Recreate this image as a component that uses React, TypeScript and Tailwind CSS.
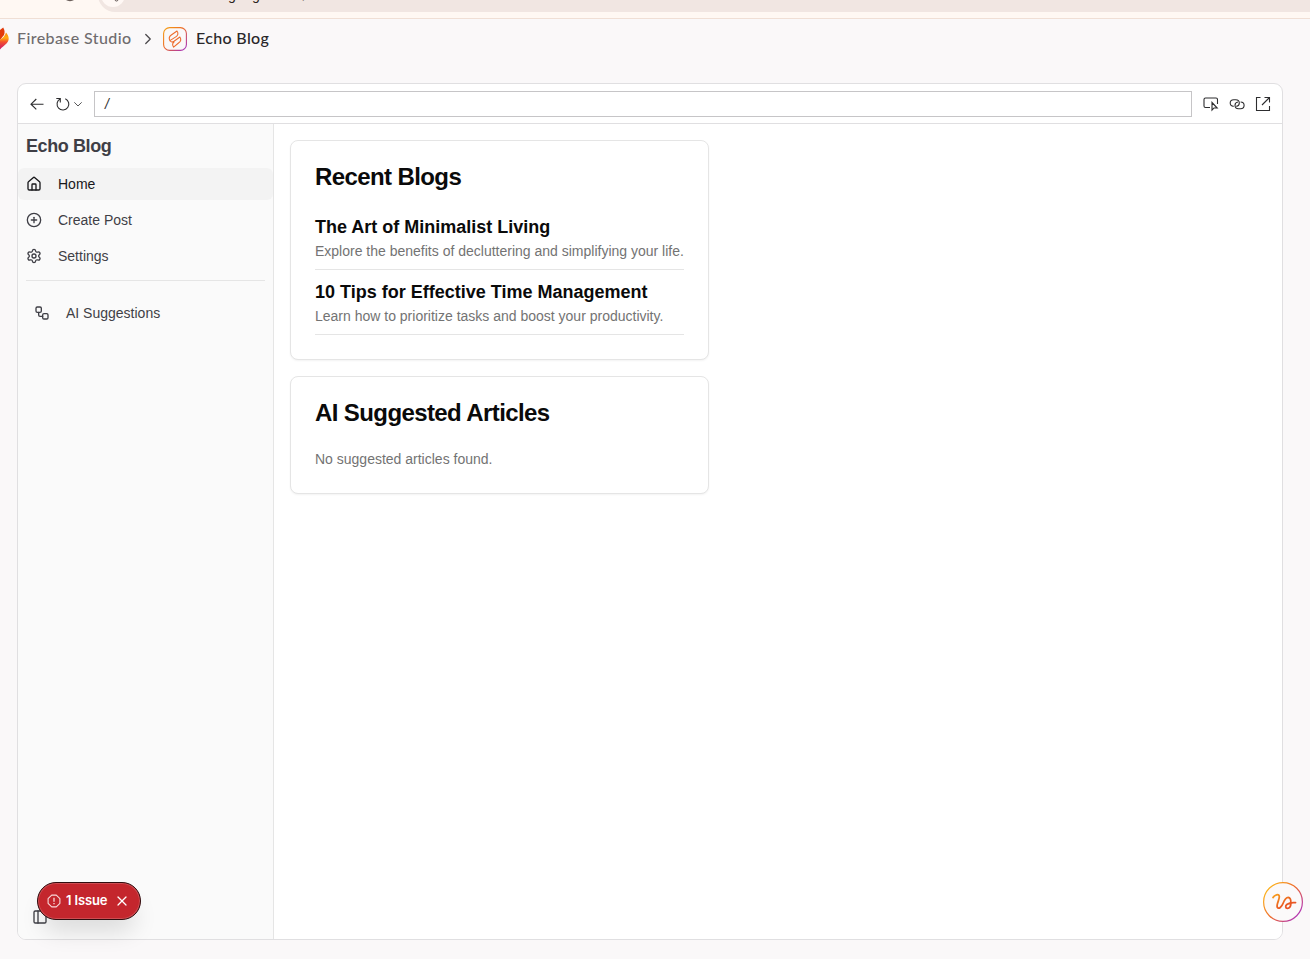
import React from "react";
import { House, CirclePlus, Settings, Workflow, PanelLeft, ChevronRight, X } from "lucide-react";

function BrowserStrip() {
  return (
    <div className="flex h-[19px] shrink-0 items-end overflow-hidden border-b border-[#f0dfd5] bg-[#fff8f3]">
      <svg className="h-[18px] w-[98px] shrink-0" viewBox="0 0 98 18" fill="none">
        <path d="M34 -.8h3M66 -1c2 1.800 6 1.800 8 0" stroke="#6b5f5b" strokeWidth="1.600" />
      </svg>
      <div className="mb-[6px] flex h-[34px] w-[1300px] shrink-0 items-center rounded-l-full bg-[#f1e6e2] pl-[3px]">
        <div className="flex h-6 w-6 shrink-0 items-center justify-center rounded-full bg-[#fff8f5]">
          <svg className="h-6 w-6" viewBox="0 0 24 24">
            <circle cx="15.500" cy="16.500" r="1.500" stroke="#5a504d" fill="none" />
          </svg>
        </div>
        <span className="ml-[5px] whitespace-nowrap font-['Roboto',sans-serif] text-[14px] leading-5 tracking-[0.080px] text-[#2b2320]">
          studio.firebase.google.com/
        </span>
      </div>
    </div>
  );
}

function Header() {
  return (
    <header className="flex h-[39px] shrink-0 items-center font-['Lato',sans-serif] text-[16px] font-medium">
      <svg className="h-6 w-[10px] shrink-0" viewBox="0 0 10 24">
        <defs>
          <linearGradient id="flame" x1="0" y1="0" x2="0" y2="1">
            <stop offset="0" stopColor="#f98a12" />
            <stop offset=".32" stopColor="#ffae12" />
            <stop offset=".55" stopColor="#f4512c" />
            <stop offset="1" stopColor="#c9156e" />
          </linearGradient>
        </defs>
        <path d="M0 3 3.200 .5C4.800 3 4.900 5.500 4 8L0 13Z" fill="#e23b0c" />
        <path d="M0 12.500C3 11 5 9 6 5.500C9.500 9.500 9.600 13.500 6.500 16.500C4.300 18.700 2 20 0 22.500Z" fill="url(#flame)" />
      </svg>
      <span className="relative -top-px ml-[7px] w-[114px] whitespace-nowrap tracking-[0.400px] text-[#6f6c6e]">Firebase Studio</span>
      <ChevronRight className="ml-[8px] h-[18px] w-[18px] text-[#4b494c]" strokeWidth={1.7} />
      <svg className="ml-[6px] h-6 w-6 shrink-0" viewBox="0 0 24 24" fill="none">
        <defs>
          <linearGradient id="appRing" x1="0" y1="0" x2="1" y2="1">
            <stop offset="0" stopColor="#f5a313" />
            <stop offset=".45" stopColor="#ec6a28" />
            <stop offset="1" stopColor="#a02cc8" />
          </linearGradient>
        </defs>
        <rect x=".6" y=".6" width="22.800" height="22.800" rx="6" stroke="url(#appRing)" strokeWidth="1.100" />
        <g stroke="#ed6b2c" strokeWidth="1.050" strokeLinejoin="round">
          <path d="M14 4C15.800 6.500 14.800 8.700 12.800 9.900L6.900 13.600C5.600 11.200 6.400 9.300 8.300 8Z" />
          <path d="M6.900 13.600C7.900 15.300 9.500 15.200 11 14.200L16.900 10C18.500 12.500 17.500 14.700 15.500 16L10.600 20.200C9 17.900 9.500 16.100 11.300 14.800" />
        </g>
      </svg>
      <span className="relative -top-px ml-[9px] whitespace-nowrap tracking-[0.350px] text-[#29272a]">Echo Blog</span>
    </header>
  );
}

function Toolbar() {
  return (
    <div className="flex h-[40px] shrink-0 items-center border-b border-[#e0dfe1] text-[#2d2d2f]">
      <svg className="ml-3 h-4 w-[15px]" viewBox="0 0 15 16" fill="none" stroke="currentColor" strokeWidth="1.150">
        <path d="M6.300 3 1 8.200l5.300 5.200M1 8.200h12.500" />
      </svg>
      <svg className="ml-[10px] h-4 w-4" viewBox="0 0 16 16" fill="none" stroke="currentColor" strokeWidth="1.100">
        <path d="M1.300 2.500h4v4M5 3A5.900 5.900 0 1 0 10.300 2.700" />
      </svg>
      <svg className="ml-[2px] h-[10px] w-[10px]" viewBox="0 0 10 10" fill="none" stroke="currentColor" strokeWidth=".8">
        <path d="M1.300 3.300 5 7l3.700-3.700" />
      </svg>
      <div className="ml-[11px] flex h-[26px] w-[1098px] items-center border border-[#c6c5c7] pl-[10px] pt-[2px] font-['Liberation_Sans',sans-serif] text-[14px] text-[#333]">
        <span className="italic">/</span>
      </div>
      <svg className="ml-[11px] h-4 w-4" viewBox="0 0 16 16" fill="none" stroke="currentColor" strokeWidth="1.100">
        <path d="M7 11.500H2.500C1.500 11.500 1 11 1 10V3.500c0-1 .5-1.500 1.500-1.500h10.500c1 0 1.500.5 1.500 1.500V8M9 6.500v7.700l2-2.200h3.200z" />
      </svg>
      <svg className="ml-[10px] h-4 w-4" viewBox="0 0 16 16" fill="none" stroke="currentColor" strokeWidth="1.100">
        <path d="M4.700 10.400C2.500 10.300 1.200 8.900 1.200 7.100C1.200 5.200 2.700 3.700 4.700 3.700H6.800C8.800 3.700 10.300 5.200 10.300 7.100C10.300 8.900 9 10.200 7.300 10.400" />
        <path d="M11.600 6C13.800 6.100 15.100 7.500 15.100 9.300C15.100 11.200 13.600 12.700 11.600 12.700H9.500C7.500 12.700 6 11.200 6 9.300C6 7.500 7.300 6.200 9 6" />
      </svg>
      <svg className="ml-[10px] h-4 w-4" viewBox="0 0 16 16" fill="none" stroke="currentColor" strokeWidth="1.100">
        <path d="M5.500 1.500H1.500v13h13V10M9.500 1.500h5v5M14.500 1.500 7 9" />
      </svg>
    </div>
  );
}

const navItems = [
  { label: "Home", Icon: House, style: "bg-[#f3f3f3] text-[#18181b]" },
  { label: "Create Post", Icon: CirclePlus, style: "text-[#3f3f46]" },
  { label: "Settings", Icon: Settings, style: "text-[#3f3f46]" },
];

function Sidebar() {
  return (
    <aside className="flex w-[256px] shrink-0 flex-col border-r border-[#e5e5e5] bg-[#fafafa] px-0 text-[14px] text-[#3f3f46]">
      <h1 className="px-2 pt-2 text-[18px] leading-7 font-semibold tracking-[-0.4px]">Echo Blog</h1>
      <nav className="mt-2 flex flex-col gap-1">
        {navItems.map(({ label, Icon, style }) => (
          <a key={label} className={`flex h-8 items-center gap-4 rounded-md px-2 ${style}`}>
            <Icon className="h-4 w-4" strokeWidth={2} />
            <span>{label}</span>
          </a>
        ))}
      </nav>
      <div className="mx-2 mt-2 h-px bg-[#e5e5e5]" />
      <a className="mt-4 flex h-8 items-center gap-4 px-4">
        <Workflow className="h-4 w-4" strokeWidth={2} />
        <span>AI Suggestions</span>
      </a>
      <PanelLeft className="mt-auto mb-[14px] ml-[14px] h-4 w-4" />
    </aside>
  );
}

const posts = [
  { title: "The Art of Minimalist Living", text: "Explore the benefits of decluttering and simplifying your life." },
  { title: "10 Tips for Effective Time Management", text: "Learn how to prioritize tasks and boost your productivity." },
];

function Card({ title, children }: { title: string; children: React.ReactNode }) {
  return (
    <section className="w-[419px] rounded-lg border border-[#e5e5e5] bg-white px-6 shadow-xs">
      <h2 className="pt-6 text-[24px] leading-6 font-semibold tracking-[-0.6px]">{title}</h2>
      {children}
    </section>
  );
}

function Content() {
  return (
    <main className="flex grow flex-col items-start gap-4 bg-white p-4 text-[#0a0a0a]">
      <Card title="Recent Blogs">
        <ul className="mt-6 mb-6">
          {posts.map((post) => (
            <li key={post.title} className="mb-2 border-b border-[#e5e5e5] pb-2 last:mb-0">
              <h3 className="text-[18px] leading-7 font-semibold">{post.title}</h3>
              <p className="text-[14px] leading-5 whitespace-nowrap text-[#737373]">{post.text}</p>
            </li>
          ))}
        </ul>
      </Card>
      <Card title="AI Suggested Articles">
        <p className="mt-6 mb-6 text-[14px] leading-5 text-[#737373]">No suggested articles found.</p>
      </Card>
    </main>
  );
}

function IssueBadge() {
  return (
    <div className="absolute top-[882px] left-[37px] flex h-[38px] w-[104px] items-center rounded-full border border-[#300d0f] bg-[#c4262d] pl-[9px] font-['Inter',sans-serif] text-[13px] font-semibold text-white shadow-[inset_0_0_0_1px_rgba(255,255,255,0.18),0_16px_24px_-6px_rgba(0,0,0,0.14)]">
      <svg className="h-[14px] w-[14px] shrink-0" viewBox="0 0 14 14" fill="none" stroke="#f8d9da" strokeWidth="1.100">
        <path d="M4.700 1.100h4.600l3.600 3.600v4.600l-3.600 3.600H4.700L1.100 9.300V4.700z" strokeLinejoin="round" />
        <path d="M7 3.700v4M7 9v1.300" strokeWidth="1.300" />
      </svg>
      <span className="ml-[5px] w-[43px] whitespace-nowrap tracking-[-0.150px]">1 Issue</span>
      <X className="ml-[5px] h-[16px] w-[16px] shrink-0" strokeWidth={1.8} />
    </div>
  );
}

function AssistantButton() {
  return (
    <button className="absolute top-[882px] left-[1263px] h-10 w-10">
      <svg className="h-10 w-10" viewBox="0 0 40 40" fill="none">
        <defs>
          <linearGradient id="ring" x1="0" y1=".1" x2="1" y2=".9">
            <stop offset="0" stopColor="#ffc21a" />
            <stop offset=".5" stopColor="#ee6b2d" />
            <stop offset="1" stopColor="#a52bd4" />
          </linearGradient>
          <linearGradient id="scribble" x1="0" y1="0" x2="1" y2="1">
            <stop offset="0" stopColor="#f8a01c" />
            <stop offset=".6" stopColor="#ea5b22" />
            <stop offset="1" stopColor="#e8502a" />
          </linearGradient>
        </defs>
        <circle cx="20" cy="20" r="19.400" fill="#fbf9fa" stroke="url(#ring)" strokeWidth="1.200" />
        <path d="M10 15.500C11.500 12.800 15.800 11.300 16.300 14.300C16.700 17.500 13 22.500 14.300 25.300C15.700 27.700 18.800 24.500 20 21.500C21.200 18.500 22.700 15.300 25.200 15.400C27.800 15.700 28 18.500 27.900 21.200C27.800 24.300 26.600 26.500 24.400 26.400C22.300 26.300 22.200 23.800 23.800 22.500C26 20.900 29 20.300 32.500 20.700" stroke="url(#scribble)" strokeWidth="1.800" strokeLinecap="round" strokeLinejoin="round" />
      </svg>
    </button>
  );
}

export default function App() {
  return (
    <div className="relative flex h-[959px] w-[1310px] flex-col overflow-hidden bg-[#faf8f9] font-['Liberation_Sans',Arial,sans-serif]">
      <BrowserStrip />
      <Header />
      <div className="mt-[25px] ml-[17px] flex h-[857px] w-[1266px] flex-col overflow-hidden rounded-[9px] border border-[#e0dfe1] bg-white">
        <Toolbar />
        <div className="flex min-h-0 grow">
          <Sidebar />
          <Content />
        </div>
      </div>
      <IssueBadge />
      <AssistantButton />
    </div>
  );
}
